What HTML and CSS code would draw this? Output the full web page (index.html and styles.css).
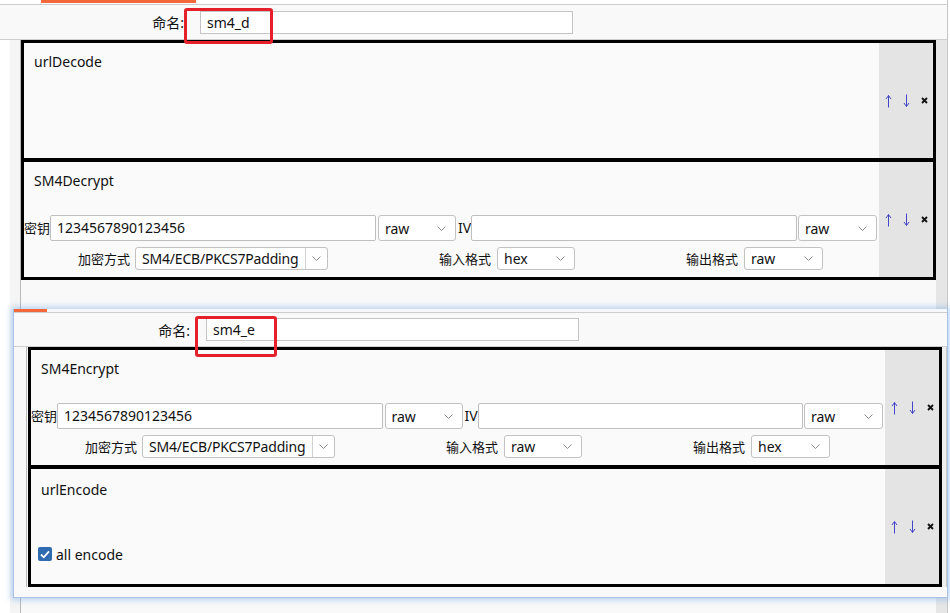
FILE: index.html
```html
<!DOCTYPE html>
<html>
<head>
<meta charset="utf-8">
<link rel="stylesheet" href="styles.css">
</head>
<body>
<div class="panel panel-main">
  <div class="tabstrip"><div class="tabbar"></div></div>
  <div class="header">
    <span class="name-label">命名:</span>
    <div class="name-input">sm4_d</div>
  </div>
  <div class="pbody">
    <div class="gutter"></div>
    <div class="list">
      <div class="box">
        <div class="box-content">
          <div class="title">urlDecode</div>
        </div>
        <div class="side">
          <span class="ctl"><svg width="7" height="14" viewBox="0 0 7 14"><path d="M3.5 1.5V13.5M1 5L3.5 1.5L6 5" fill="none" stroke="#4545c8" stroke-width="1"/></svg></span>
          <span class="ctl"><svg width="7" height="14" viewBox="0 0 7 14"><path d="M3.5 0.5V12.5M1 9L3.5 12.5L6 9" fill="none" stroke="#4545c8" stroke-width="1"/></svg></span>
          <span class="ctl"><svg width="7" height="7" viewBox="0 0 7 7"><path d="M1 1L6 6M6 1L1 6" stroke="#111" stroke-width="1.8"/></svg></span>
        </div>
      </div>
      <div class="box">
        <div class="box-content">
          <div class="title">SM4Decrypt</div>
          <div class="keyrow">
            <span class="klabel">密钥</span>
            <div class="kinput">1234567890123456</div>
            <div class="sel sel-k"><span>raw</span><svg class="chev" width="9" height="5" viewBox="0 0 9 5"><path d="M0.5 0.5L4.5 4.5L8.5 0.5" fill="none" stroke="#8a8a8a"/></svg></div>
            <span class="ivlabel">IV</span>
            <div class="kinput"></div>
            <div class="sel sel-k2"><span>raw</span><svg class="chev" width="9" height="5" viewBox="0 0 9 5"><path d="M0.5 0.5L4.5 4.5L8.5 0.5" fill="none" stroke="#8a8a8a"/></svg></div>
          </div>
          <div class="optrow">
            <div class="opt">
              <span class="olabel">加密方式</span>
              <div class="combo"><span class="combo-text">SM4/ECB/PKCS7Padding</span><span class="combo-btn"><svg class="chev" width="9" height="5" viewBox="0 0 9 5"><path d="M0.5 0.5L4.5 4.5L8.5 0.5" fill="none" stroke="#8a8a8a"/></svg></span></div>
            </div>
            <div class="opt">
              <span class="olabel">输入格式</span>
              <div class="sel sel-o"><span>hex</span><svg class="chev" width="9" height="5" viewBox="0 0 9 5"><path d="M0.5 0.5L4.5 4.5L8.5 0.5" fill="none" stroke="#8a8a8a"/></svg></div>
            </div>
            <div class="opt">
              <span class="olabel">输出格式</span>
              <div class="sel sel-o2"><span>raw</span><svg class="chev" width="9" height="5" viewBox="0 0 9 5"><path d="M0.5 0.5L4.5 4.5L8.5 0.5" fill="none" stroke="#8a8a8a"/></svg></div>
            </div>
          </div>
        </div>
        <div class="side">
          <span class="ctl"><svg width="7" height="14" viewBox="0 0 7 14"><path d="M3.5 1.5V13.5M1 5L3.5 1.5L6 5" fill="none" stroke="#4545c8" stroke-width="1"/></svg></span>
          <span class="ctl"><svg width="7" height="14" viewBox="0 0 7 14"><path d="M3.5 0.5V12.5M1 9L3.5 12.5L6 9" fill="none" stroke="#4545c8" stroke-width="1"/></svg></span>
          <span class="ctl"><svg width="7" height="7" viewBox="0 0 7 7"><path d="M1 1L6 6M6 1L1 6" stroke="#111" stroke-width="1.8"/></svg></span>
        </div>
      </div>
    </div>
    <div class="track"></div>
  </div>
</div>

<div class="panel panel-ghost">
  <div class="tabstrip"><div class="tabbar"></div></div>
  <div class="header">
    <span class="name-label">命名:</span>
    <div class="name-input">sm4_e</div>
  </div>
  <div class="pbody">
    <div class="gutter"></div>
    <div class="list">
      <div class="box">
        <div class="box-content">
          <div class="title">SM4Encrypt</div>
          <div class="keyrow">
            <span class="klabel">密钥</span>
            <div class="kinput">1234567890123456</div>
            <div class="sel sel-k"><span>raw</span><svg class="chev" width="9" height="5" viewBox="0 0 9 5"><path d="M0.5 0.5L4.5 4.5L8.5 0.5" fill="none" stroke="#8a8a8a"/></svg></div>
            <span class="ivlabel">IV</span>
            <div class="kinput"></div>
            <div class="sel sel-k2"><span>raw</span><svg class="chev" width="9" height="5" viewBox="0 0 9 5"><path d="M0.5 0.5L4.5 4.5L8.5 0.5" fill="none" stroke="#8a8a8a"/></svg></div>
          </div>
          <div class="optrow">
            <div class="opt">
              <span class="olabel">加密方式</span>
              <div class="combo"><span class="combo-text">SM4/ECB/PKCS7Padding</span><span class="combo-btn"><svg class="chev" width="9" height="5" viewBox="0 0 9 5"><path d="M0.5 0.5L4.5 4.5L8.5 0.5" fill="none" stroke="#8a8a8a"/></svg></span></div>
            </div>
            <div class="opt">
              <span class="olabel">输入格式</span>
              <div class="sel sel-o"><span>raw</span><svg class="chev" width="9" height="5" viewBox="0 0 9 5"><path d="M0.5 0.5L4.5 4.5L8.5 0.5" fill="none" stroke="#8a8a8a"/></svg></div>
            </div>
            <div class="opt">
              <span class="olabel">输出格式</span>
              <div class="sel sel-o2"><span>hex</span><svg class="chev" width="9" height="5" viewBox="0 0 9 5"><path d="M0.5 0.5L4.5 4.5L8.5 0.5" fill="none" stroke="#8a8a8a"/></svg></div>
            </div>
          </div>
        </div>
        <div class="side">
          <span class="ctl"><svg width="7" height="14" viewBox="0 0 7 14"><path d="M3.5 1.5V13.5M1 5L3.5 1.5L6 5" fill="none" stroke="#4545c8" stroke-width="1"/></svg></span>
          <span class="ctl"><svg width="7" height="14" viewBox="0 0 7 14"><path d="M3.5 0.5V12.5M1 9L3.5 12.5L6 9" fill="none" stroke="#4545c8" stroke-width="1"/></svg></span>
          <span class="ctl"><svg width="7" height="7" viewBox="0 0 7 7"><path d="M1 1L6 6M6 1L1 6" stroke="#111" stroke-width="1.8"/></svg></span>
        </div>
      </div>
      <div class="box">
        <div class="box-content">
          <div class="title title-enc">urlEncode</div>
          <div class="checkrow">
            <span class="checkbox"><svg width="10" height="9" viewBox="0 0 10 9"><path d="M1 4.5L3.8 7.3L9 1.3" fill="none" stroke="#fff" stroke-width="1.8"/></svg></span>
            <span>all encode</span>
          </div>
        </div>
        <div class="side">
          <span class="ctl"><svg width="7" height="14" viewBox="0 0 7 14"><path d="M3.5 1.5V13.5M1 5L3.5 1.5L6 5" fill="none" stroke="#4545c8" stroke-width="1"/></svg></span>
          <span class="ctl"><svg width="7" height="14" viewBox="0 0 7 14"><path d="M3.5 0.5V12.5M1 9L3.5 12.5L6 9" fill="none" stroke="#4545c8" stroke-width="1"/></svg></span>
          <span class="ctl"><svg width="7" height="7" viewBox="0 0 7 7"><path d="M1 1L6 6M6 1L1 6" stroke="#111" stroke-width="1.8"/></svg></span>
        </div>
      </div>
    </div>
    <div class="track"></div>
  </div>
</div>

<div class="mark mark-1"></div>
<div class="mark mark-2"></div>
</body>
</html>
```

FILE: styles.css
```css
* { box-sizing: border-box; }
html, body { margin: 0; padding: 0; }
body {
  width: 950px;
  height: 613px;
  overflow: hidden;
  position: relative;
  background: #fff;
  font-family: "Noto Sans", "Noto Sans CJK SC", sans-serif;
  font-size: 14px;
  color: #111;
}

.panel {
  display: flex;
  flex-direction: column;
}

/* base panel */
.panel-main {
  width: 948px;
  height: 613px;
  border-right: 1px solid #c6c6c6;
}
.panel-main .tabstrip { height: 4px; }
.panel-main .tabbar { margin-left: 41px; width: 155px; height: 3px; background: #f2683a; }

.header {
  flex: none;
  display: flex;
  align-items: center;
  background: #f9f9f9;
  border-top: 1px solid #cdcdcd;
  border-bottom: 1px solid #cfcfcf;
}
.panel-main .header { height: 36px; }
.name-label {
  text-align: right;
  margin-right: 16px;
  font-size: 14px;
}
.panel-main .name-label { width: 184px; }
.name-input {
  width: 373px;
  height: 23px;
  background: #fff;
  border: 1px solid #c4c4c4;
  padding-left: 6px;
  line-height: 21px;
  font-size: 14px;
}

.pbody {
  flex: 1;
  display: flex;
  background: #f9f9f9;
}
.gutter {
  flex: none;
  border-right: 1px solid #b9b9b9;
}
.panel-main .gutter {
  width: 21px;
  background: linear-gradient(to right, #fff 10px, #f5f5f5 10px);
}
.list { flex: none; }
.panel-main .list { width: 915px; }
.track { flex: none; }
.panel-main .track { width: 11px; background: #e6e6e6; }

/* boxes */
.box {
  display: flex;
  border: 3px solid #000;
  min-height: 121px;
  background: #fafafa;
}
.box + .box { margin-top: -2px; }
.box-content {
  flex: 1;
  padding: 8px 0 7px 0;
}
.title {
  height: 20px;
  line-height: 20px;
  padding-left: 10px;
  margin-top: 1px;
}
.side {
  flex: none;
  width: 54px;
  background: #e4e4e4;
  display: flex;
  align-items: center;
}
.ctl {
  width: 18px;
  display: flex;
  justify-content: center;
  align-items: center;
}

.keyrow {
  margin-top: 24px;
  height: 26px;
  display: flex;
  align-items: stretch;
  padding-right: 2px;
}
.klabel {
  width: 26px;
  font-size: 13px;
  line-height: 26px;
}
.kinput {
  flex: 1;
  background: #fff;
  border: 1px solid #bfbfbf;
  border-radius: 2px;
  padding-left: 6px;
  line-height: 24px;
  font-size: 14px;
}
.ivlabel {
  margin-left: 2px;
  line-height: 26px;
  width: 13px;
}
.sel {
  display: flex;
  align-items: center;
  justify-content: space-between;
  background: #fff;
  border: 1px solid #c2c2c2;
  border-radius: 3px;
  padding: 0 9px 0 6px;
  font-size: 14px;
}
.sel-k { width: 78px; margin-left: 2px; }
.sel-k2 { width: 79px; margin-left: 1px; }
.sel-o { width: 78px; height: 23px; }
.sel-o2 { width: 79px; height: 23px; }

.optrow {
  margin-top: 6px;
  height: 23px;
  display: flex;
  padding-left: 54px;
  gap: 111px;
}
.opt {
  display: flex;
  align-items: center;
}
.olabel {
  font-size: 13px;
  width: 52px;
  margin-right: 5px;
}
.opt + .opt .olabel { margin-right: 6px; }
.combo {
  width: 193px;
  height: 23px;
  display: flex;
  background: #fff;
  border: 1px solid #c2c2c2;
  border-radius: 3px;
}
.combo-text {
  flex: 1;
  padding-left: 6px;
  line-height: 21px;
  font-size: 14px;
  letter-spacing: -0.2px;
  white-space: nowrap;
}
.combo-btn {
  width: 22px;
  flex: none;
  border-left: 1px solid #d2d2d2;
  display: flex;
  align-items: center;
  justify-content: center;
}

.title-enc { margin-top: 3px; }
.checkrow {
  margin-top: 44px;
  height: 20px;
  display: flex;
  align-items: center;
  padding-left: 7px;
}
.checkbox {
  width: 14px;
  height: 14px;
  border-radius: 2px;
  background: #2e6bb1;
  display: flex;
  align-items: center;
  justify-content: center;
  margin-right: 4px;
}

/* dragged copy lying over the base panel */
.panel-ghost {
  position: absolute;
  left: 13px;
  top: 309px;
  width: 935px;
  height: 289px;
  background: #f9f9f9;
  border-left: 1px solid #a9c3e6;
  border-right: 1px solid #a9c3e6;
  border-bottom: 1px solid #a9c3e6;
  box-shadow: 0 0 6px 2px rgba(120, 170, 235, 0.5);
}
.panel-ghost .tabstrip { height: 3px; background: #f4f8fd; }
.panel-ghost .tabbar { width: 33px; height: 3px; background: #f2683a; }
.panel-ghost .header { height: 35px; }
.panel-ghost .name-label { width: 176px; }
.panel-ghost .pbody { padding-bottom: 10px; }
.panel-ghost .gutter { width: 13px; background: #f8f8f8; }
.panel-ghost .list { width: 914px; margin-left: 1px; }
.panel-ghost .track { width: 5px; background: #eeeeee; border-right: 1px solid #c8c8c8; }

/* red annotation rectangles */
.mark {
  position: absolute;
  border: 3px solid #e5202b;
  border-radius: 3px;
}
.mark-1 { left: 184px; top: 8px; width: 89px; height: 36px; }
.mark-2 { left: 195px; top: 316px; width: 82px; height: 41px; }
```
